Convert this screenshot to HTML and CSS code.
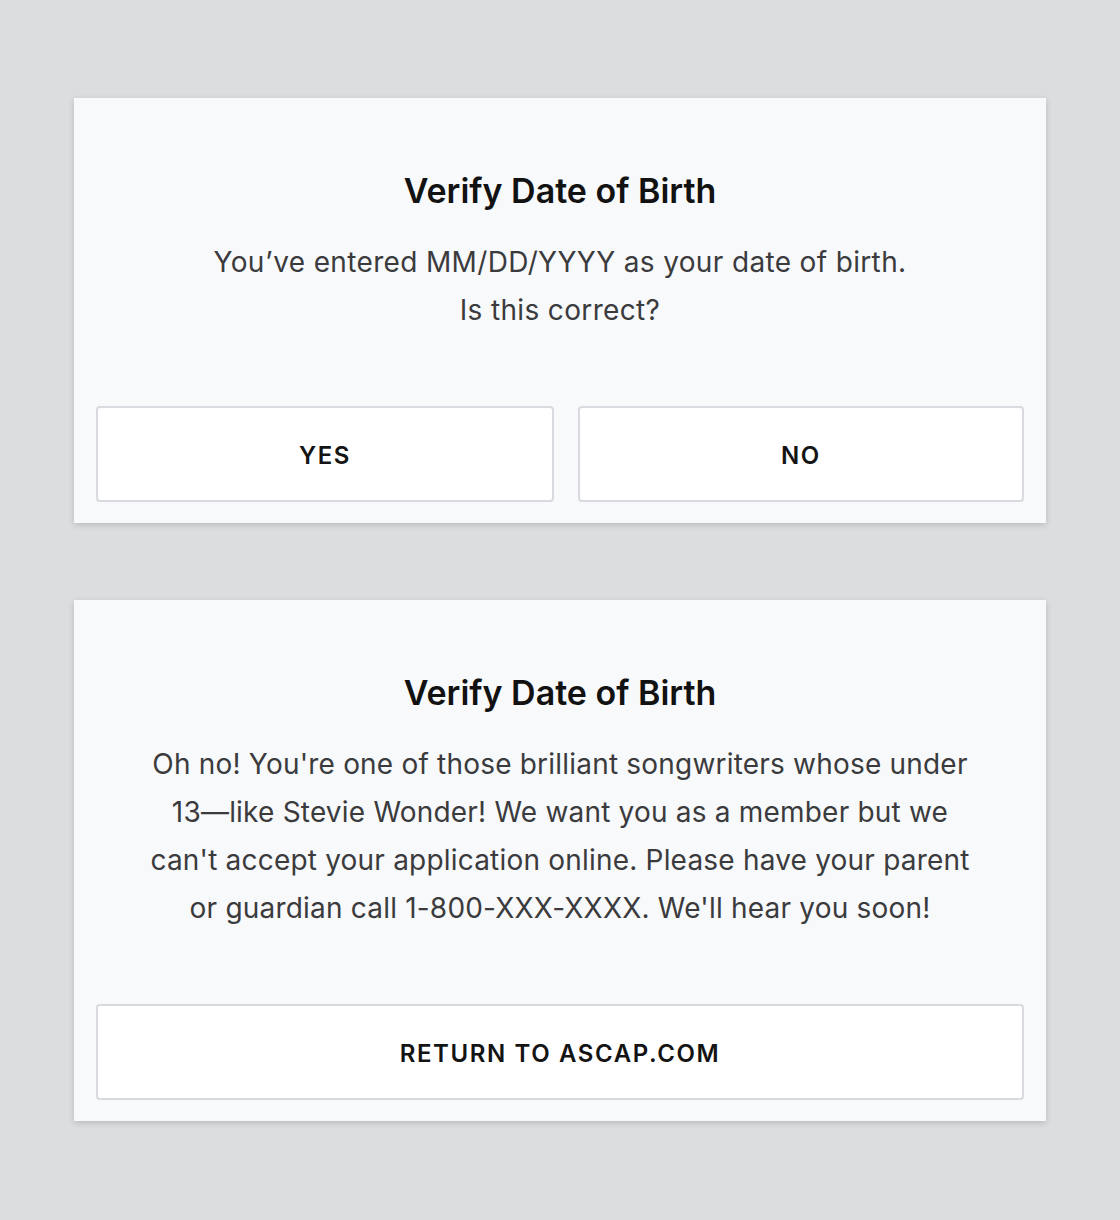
FILE: index.html
```html
<!DOCTYPE html>
<html lang="en">
<head>
<meta charset="utf-8">
<title>Verify Date of Birth</title>
<link rel="stylesheet" href="styles.css">
</head>
<body>
<main class="page">
  <section class="card">
    <h2 class="card-title">Verify Date of Birth</h2>
    <p class="card-text">You’ve entered MM/DD/YYYY as your date of birth.<br>Is this correct?</p>
    <div class="actions actions-two">
      <button class="btn">YES</button>
      <button class="btn">NO</button>
    </div>
  </section>
  <section class="card">
    <h2 class="card-title">Verify Date of Birth</h2>
    <p class="card-text card-text-long">Oh no! You're one of those brilliant songwriters whose under 13—like Stevie Wonder! We want you as a member but we can't accept your application online. Please have your parent or guardian call 1-800-XXX-XXXX. We'll hear you soon!</p>
    <div class="actions">
      <button class="btn">RETURN TO ASCAP.COM</button>
    </div>
  </section>
</main>
</body>
</html>
```

FILE: styles.css
```css
html, body {
  margin: 0;
  padding: 0;
}
body {
  background: #dcdddf;
  font-family: "Inter", "Noto Sans", sans-serif;
  width: 1120px;
  height: 1220px;
  overflow: hidden;
}
.page {
  display: flex;
  flex-direction: column;
  gap: 77px;
  padding: 98px 74px 0 74px;
}
.card {
  background: #f8f9fb;
  box-shadow: 0 2px 6px rgba(0, 0, 0, 0.16);
  padding: 73px 22px 21px;
  text-align: center;
}
.card-title {
  margin: 0;
  font-size: 34px;
  line-height: 40px;
  font-weight: 600;
  color: #121212;
}
.card-text {
  margin: 27px auto 0;
  font-size: 28px;
  letter-spacing: 0.35px;
  line-height: 48px;
  color: #3b3b3d;
}
.card-text-long {
  max-width: 830px;
  letter-spacing: 0.2px;
}
.actions {
  margin-top: 72px;
  display: flex;
  gap: 24px;
}
.actions-two .btn:first-child {
  flex: 458 1 0;
}
.actions-two .btn:last-child {
  flex: 446 1 0;
}
.btn {
  flex: 1;
  height: 96px;
  padding: 3px 0 0;
  background: #ffffff;
  border: 2px solid #d9dadf;
  border-radius: 4px;
  font-family: inherit;
  font-size: 24px;
  font-weight: 600;
  letter-spacing: 1.6px;
  color: #141414;
}
```
